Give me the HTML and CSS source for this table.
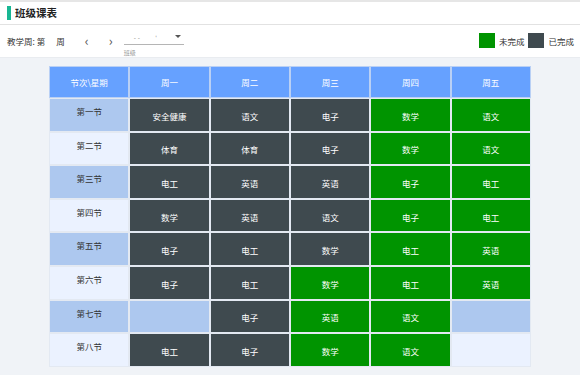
FILE: index.html
```
<!DOCTYPE html>
<html lang="zh">
<head>
<meta charset="utf-8">
<link rel="stylesheet" href="styles.css">
</head>
<body>
<div class="titlebar"><span class="accent"></span><span class="title">班级课表</span></div>
<div class="toolbar">
  <div class="week">
    <span>教学周:&nbsp;第</span><span class="weeknum"></span><span>周</span>
    <span class="nav">&lsaquo;</span><span class="nav">&rsaquo;</span>
  </div>
  <div class="select">
    <div class="field"><span class="ph">-&nbsp;-&nbsp;&nbsp;&nbsp;&nbsp;&nbsp;&nbsp;&nbsp;&nbsp;'</span><span class="caret"></span></div>
    <div class="lbl">班级</div>
  </div>
  <div class="legend">
    <span class="sw green"></span><span>未完成</span>
    <span class="sw dark"></span><span>已完成</span>
  </div>
</div>
<div class="main">
  <div class="grid">
    <div class="h">节次\星期</div><div class="h">周一</div><div class="h">周二</div><div class="h">周三</div><div class="h">周四</div><div class="h">周五</div>

    <div class="lab odd">第一节</div><div class="c dark">安全健康</div><div class="c dark">语文</div><div class="c dark">电子</div><div class="c green">数学</div><div class="c green">语文</div>
    <div class="lab even">第二节</div><div class="c dark">体育</div><div class="c dark">体育</div><div class="c dark">电子</div><div class="c green">数学</div><div class="c green">语文</div>
    <div class="lab odd">第三节</div><div class="c dark">电工</div><div class="c dark">英语</div><div class="c dark">英语</div><div class="c green">电子</div><div class="c green">电工</div>
    <div class="lab even">第四节</div><div class="c dark">数学</div><div class="c dark">英语</div><div class="c dark">语文</div><div class="c green">电子</div><div class="c green">电工</div>
    <div class="lab odd">第五节</div><div class="c dark">电子</div><div class="c dark">电工</div><div class="c dark">数学</div><div class="c green">电工</div><div class="c green">英语</div>
    <div class="lab even">第六节</div><div class="c dark">电子</div><div class="c dark">电工</div><div class="c green">数学</div><div class="c green">电工</div><div class="c green">英语</div>
    <div class="lab odd">第七节</div><div class="c odd"></div><div class="c dark">电子</div><div class="c green">英语</div><div class="c green">语文</div><div class="c odd"></div>
    <div class="lab even">第八节</div><div class="c dark">电工</div><div class="c dark">电子</div><div class="c green">数学</div><div class="c green">语文</div><div class="c even"></div>
  </div>
</div>
</body>
</html>
```
FILE: styles.css
```
* { box-sizing: border-box; }
html, body { margin: 0; padding: 0; }
body {
  width: 580px;
  height: 375px;
  overflow: hidden;
  background: #f0f3f7;
  font-family: "Noto Sans CJK SC", "Noto Sans", sans-serif;
  color: #333;
}
.titlebar {
  height: 25px;
  background: #fff;
  border-top: 2px solid #e6e6e6;
  border-bottom: 1px solid #e2e2e2;
  display: flex;
  align-items: center;
  padding-left: 7px;
}
.accent {
  width: 4px;
  height: 14px;
  background: #18b793;
  margin-right: 4px;
}
.title {
  font-size: 10.5px;
  font-weight: bold;
  color: #222;
  line-height: 1;
}
.toolbar {
  height: 33px;
  background: #fff;
  display: flex;
  align-items: flex-start;
  padding: 0 6px 0 7px;
  border-bottom: 1px solid #e9ecf0;
}
.week {
  display: flex;
  align-items: center;
  font-size: 8.5px;
  color: #333;
  height: 33px;
  padding-bottom: 1px;
}
.weeknum { width: 11px; }
.nav {
  font-size: 13px;
  color: #555;
  margin-left: 20px;
  width: 10px;
  line-height: 1;
  padding-bottom: 2px;
}
.nav + .nav { margin-left: 14px; }
.select {
  margin-left: 5px;
  width: 60px;
  padding-top: 8px;
}
.field {
  height: 12px;
  border-bottom: 1px solid #b5b5b5;
  position: relative;
}
.ph {
  position: absolute;
  left: 10px;
  top: 1px;
  font-size: 6px;
  color: #888;
  font-family: "DejaVu Sans", sans-serif;
}
.caret {
  position: absolute;
  right: 3px;
  top: 2px;
  width: 0;
  height: 0;
  border-left: 3px solid transparent;
  border-right: 3px solid transparent;
  border-top: 3px solid #555;
}
.lbl {
  font-size: 6px;
  color: #999;
  margin-top: 3px;
}
.legend {
  margin-left: auto;
  display: flex;
  align-items: center;
  height: 33px;
  font-size: 8.5px;
  color: #333;
  padding-bottom: 2px;
}
.sw {
  width: 16px;
  height: 15px;
  margin-right: 4px;
}
.sw.green { background: #009400; }
.sw.dark { background: #3f4a4f; margin-left: 4px; }
.main {
  padding-top: 8px;
  display: flex;
  justify-content: center;
}
.grid {
  width: 482px;
  display: grid;
  grid-template-columns: repeat(6, 1fr);
  grid-template-rows: 32px repeat(8, 33.6px);
}
.grid > div {
  border: 1px solid #e3e9f2;
  font-size: 8.5px;
  display: flex;
  justify-content: center;
}
.h {
  background: #66a1ff;
  color: #fff;
  align-items: center;
  border-color: #b9d0f5 !important;
}
.lab {
  color: #333;
  padding-top: 6px;
  align-items: flex-start;
}
.odd { background: #adc8ef; }
.even { background: #ebf2ff; }
.c {
  color: #fff;
  align-items: center;
  padding-top: 2px;
}
.dark { background: #3f4a4f; }
.green { background: #009400; }
```
